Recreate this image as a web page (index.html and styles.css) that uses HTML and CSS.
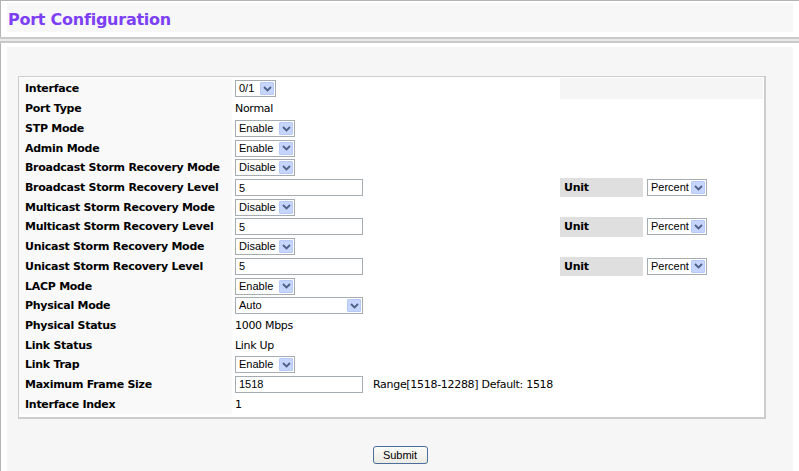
FILE: index.html
```html
<!DOCTYPE html>
<html lang="en">
<head>
<meta charset="utf-8">
<title>Port Configuration</title>
<link rel="stylesheet" href="styles.css">
</head>
<body>
<div class="frame-top">
  <div class="titlebox"><h1 class="title">Port Configuration</h1></div>
</div>
<div class="frame-split"></div>
<div class="frame-main">
  <div class="panel">
    <form class="cfg">
      <div class="row first">
        <div class="lbl">Interface</div>
        <div class="val"><span class="sel w41"><select><option>0/1</option></select><span class="arr"><svg viewBox="0 0 9 6" width="9" height="6"><path d="M1 1 L4.5 4.5 L8 1"/></svg></span></span></div>
        <div class="fill"></div>
      </div>
      <div class="row"><div class="lbl">Port Type</div><div class="val">Normal</div><div class="unit-empty"></div></div>
      <div class="row"><div class="lbl">STP Mode</div><div class="val"><span class="sel w60"><select><option>Enable</option></select><span class="arr"><svg viewBox="0 0 9 6" width="9" height="6"><path d="M1 1 L4.5 4.5 L8 1"/></svg></span></span></div><div class="unit-empty"></div></div>
      <div class="row"><div class="lbl">Admin Mode</div><div class="val"><span class="sel w60"><select><option>Enable</option></select><span class="arr"><svg viewBox="0 0 9 6" width="9" height="6"><path d="M1 1 L4.5 4.5 L8 1"/></svg></span></span></div><div class="unit-empty"></div></div>
      <div class="row"><div class="lbl">Broadcast Storm Recovery Mode</div><div class="val"><span class="sel w60"><select><option>Disable</option></select><span class="arr"><svg viewBox="0 0 9 6" width="9" height="6"><path d="M1 1 L4.5 4.5 L8 1"/></svg></span></span></div><div class="unit-empty"></div></div>
      <div class="row"><div class="lbl">Broadcast Storm Recovery Level</div><div class="val"><input class="txt" type="text" value="5"></div><div class="unit">Unit</div><div class="unit-val"><span class="sel w60"><select><option>Percent</option></select><span class="arr"><svg viewBox="0 0 9 6" width="9" height="6"><path d="M1 1 L4.5 4.5 L8 1"/></svg></span></span></div></div>
      <div class="row"><div class="lbl">Multicast Storm Recovery Mode</div><div class="val"><span class="sel w60"><select><option>Disable</option></select><span class="arr"><svg viewBox="0 0 9 6" width="9" height="6"><path d="M1 1 L4.5 4.5 L8 1"/></svg></span></span></div><div class="unit-empty"></div></div>
      <div class="row"><div class="lbl">Multicast Storm Recovery Level</div><div class="val"><input class="txt" type="text" value="5"></div><div class="unit">Unit</div><div class="unit-val"><span class="sel w60"><select><option>Percent</option></select><span class="arr"><svg viewBox="0 0 9 6" width="9" height="6"><path d="M1 1 L4.5 4.5 L8 1"/></svg></span></span></div></div>
      <div class="row"><div class="lbl">Unicast Storm Recovery Mode</div><div class="val"><span class="sel w60"><select><option>Disable</option></select><span class="arr"><svg viewBox="0 0 9 6" width="9" height="6"><path d="M1 1 L4.5 4.5 L8 1"/></svg></span></span></div><div class="unit-empty"></div></div>
      <div class="row"><div class="lbl">Unicast Storm Recovery Level</div><div class="val"><input class="txt" type="text" value="5"></div><div class="unit">Unit</div><div class="unit-val"><span class="sel w60"><select><option>Percent</option></select><span class="arr"><svg viewBox="0 0 9 6" width="9" height="6"><path d="M1 1 L4.5 4.5 L8 1"/></svg></span></span></div></div>
      <div class="row"><div class="lbl">LACP Mode</div><div class="val"><span class="sel w60"><select><option>Enable</option></select><span class="arr"><svg viewBox="0 0 9 6" width="9" height="6"><path d="M1 1 L4.5 4.5 L8 1"/></svg></span></span></div><div class="unit-empty"></div></div>
      <div class="row"><div class="lbl">Physical Mode</div><div class="val"><span class="sel w128"><select><option>Auto</option></select><span class="arr"><svg viewBox="0 0 9 6" width="9" height="6"><path d="M1 1 L4.5 4.5 L8 1"/></svg></span></span></div><div class="unit-empty"></div></div>
      <div class="row"><div class="lbl">Physical Status</div><div class="val">1000 Mbps</div><div class="unit-empty"></div></div>
      <div class="row"><div class="lbl">Link Status</div><div class="val">Link Up</div><div class="unit-empty"></div></div>
      <div class="row"><div class="lbl">Link Trap</div><div class="val"><span class="sel w60"><select><option>Enable</option></select><span class="arr"><svg viewBox="0 0 9 6" width="9" height="6"><path d="M1 1 L4.5 4.5 L8 1"/></svg></span></span></div><div class="unit-empty"></div></div>
      <div class="row"><div class="lbl">Maximum Frame Size</div><div class="val"><input class="txt" type="text" value="1518"><span class="hint">Range[1518-12288] Default: 1518</span></div><div class="unit-empty"></div></div>
      <div class="row"><div class="lbl">Interface Index</div><div class="val">1</div><div class="unit-empty"></div></div>
    </form>
    <div class="actions"><button type="button" class="btn">Submit</button></div>
  </div>
</div>
</body>
</html>
```

FILE: styles.css
```css
html, body {
  margin: 0;
  padding: 0;
  background: #ffffff;
  height: 471px;
  overflow: hidden;
}

body {
  display: flex;
  flex-direction: column;
  font-family: "DejaVu Sans", Verdana, sans-serif;
  font-size: 11px;
  color: #000;
}

.frame-top {
  height: 37px;
  box-sizing: border-box;
  border-top: 1px solid #b4b4b4;
  border-left: 1px solid #b4b4b4;
  padding: 2px 6px 0 6px;
}

.titlebox {
  height: 29px;
  box-sizing: border-box;
  padding-top: 3px;
  background: #f7f7f7;
  display: flex;
  align-items: center;
}

.title {
  margin: 0 0 0 1px;
  font-family: "DejaVu Sans", Verdana, sans-serif;
  font-weight: bold;
  font-size: 16px;
  letter-spacing: -0.25px;
  color: #7d3ff4;
}

.frame-split {
  height: 6px;
  box-sizing: border-box;
  border-top: 2px solid #c9c9c9;
  border-bottom: 2px solid #c9c9c9;
  background: #e9e9e9;
}

.frame-main {
  flex: 1;
  display: flex;
  border-left: 1px solid #b4b4b4;
  padding: 4px 6px 0 6px;
}

.panel {
  flex: 1;
  background: #f6f6f6;
  padding: 29px 0 0 11px;
}

.cfg {
  width: 748px;
  box-sizing: border-box;
  border: 1px solid #cdcdcd;
  border-right-width: 2px;
  border-bottom-width: 2px;
  background: #ffffff;
  padding: 1px 0 3px 0;
}

.row {
  display: grid;
  grid-template-columns: 213px 328px 83px 1fr;
  height: 19.7px;
}

.row.first {
  height: 21px;
}

.lbl {
  display: flex;
  align-items: center;
  padding-left: 6px;
  font-weight: bold;
  letter-spacing: -0.27px;
  background: #f9f9f9;
  white-space: nowrap;
}

.val {
  display: flex;
  align-items: center;
  padding-left: 3px;
  white-space: nowrap;
  letter-spacing: -0.3px;
}

.fill {
  grid-column: 3 / 5;
  background: #f5f5f5;
  margin-right: 1px;
}

.unit-empty {
  grid-column: 3 / 5;
}

.unit {
  display: flex;
  align-items: center;
  padding-left: 4px;
  font-weight: bold;
  letter-spacing: -0.27px;
  background: #dfdfdf;
}

.unit-val {
  display: flex;
  align-items: center;
  padding-left: 4px;
}

.sel {
  display: inline-flex;
  box-sizing: border-box;
  height: 17px;
  border: 1px solid #a5acb2;
  background: #ffffff;
  letter-spacing: 0;
}

.sel select {
  appearance: none;
  -webkit-appearance: none;
  border: 0;
  background: transparent;
  font-family: "Liberation Sans", Arial, sans-serif;
  font-size: 11px;
  color: #000;
  padding: 0 0 0 3px;
  margin: 0;
  flex: 1;
  min-width: 0;
  height: 15px;
  line-height: 15px;
  outline: none;
}

.sel .arr {
  width: 14px;
  margin: 1px 1px 1px 0;
  box-sizing: border-box;
  background: #c5d5fc;
  border: 1px solid #b7c9f6;
  border-radius: 1px;
  display: flex;
  align-items: center;
  justify-content: center;
}

.sel .arr svg path {
  fill: none;
  stroke: #4d6185;
  stroke-width: 1.8;
}

.w41 { width: 41px; }
.w60 { width: 60px; }
.w128 { width: 128px; }

.txt {
  box-sizing: border-box;
  width: 128px;
  height: 17px;
  margin: 0;
  border: 1px solid #a5acb2;
  background: #fff;
  font-family: "Liberation Sans", Arial, sans-serif;
  font-size: 11px;
  letter-spacing: 0;
  padding: 0 3px;
  outline: none;
}

.hint {
  margin-left: 10px;
}

.actions {
  display: flex;
  justify-content: center;
  padding: 27px 0 0 0;
  margin-left: -11px;
}

.btn {
  box-sizing: border-box;
  width: 55px;
  height: 18px;
  padding: 0;
  border: 1px solid #4a6d9c;
  border-radius: 3px;
  background: linear-gradient(#fbfbf8, #ecebe4);
  font-family: "Liberation Sans", Arial, sans-serif;
  font-size: 11px;
  color: #000;
}
```
